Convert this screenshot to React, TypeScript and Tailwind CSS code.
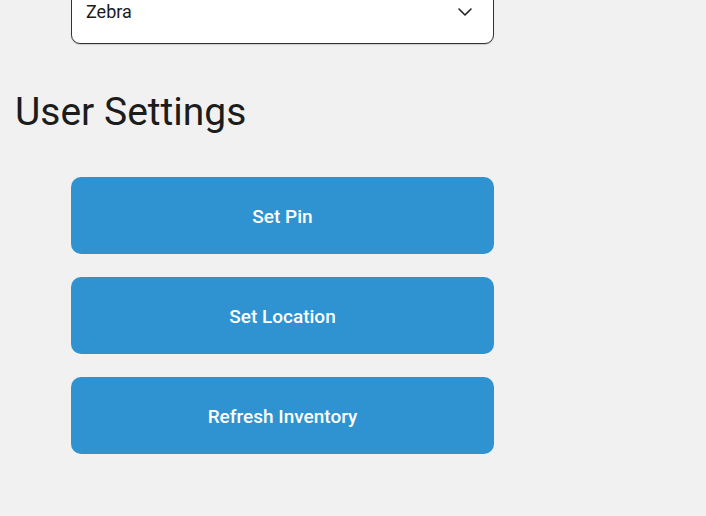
import { ChevronDown } from "lucide-react";

const actions = ["Set Pin", "Set Location", "Refresh Inventory"];

export default function App() {
  return (
    <div className="h-[516px] w-[706px] overflow-hidden bg-[#f1f1f1] font-['Roboto',sans-serif] text-[#1c1c1c]">
      <div className="pl-[71px]">
        <div className="-mt-[20px] flex h-[64px] w-[423px] items-center justify-between rounded-[9px] border-[1.5px] border-[#333] bg-white pl-[14px] pr-[16px] shadow-[0_1px_1px_rgba(0,0,0,0.15)]">
          <span className="text-[18px] leading-none">Zebra</span>
          <ChevronDown className="h-[24px] w-[24px] text-[#222]" strokeWidth={1.6} />
        </div>
      </div>

      <h1 className="mt-[49px] pl-[15px] text-[39px] leading-none">User Settings</h1>

      <div className="mt-[45px] flex flex-col gap-[23px] pl-[71px]">
        {actions.map((label) => (
          <button
            key={label}
            className="flex h-[77px] w-[423px] items-center justify-center rounded-[10px] bg-[#2e93d0] pt-[3px] text-[19px] font-medium text-white"
          >
            {label}
          </button>
        ))}
      </div>
    </div>
  );
}
